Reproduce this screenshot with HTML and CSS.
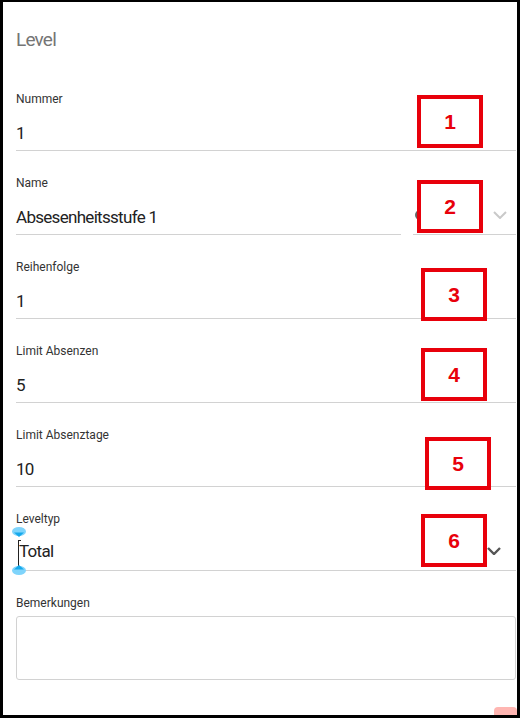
FILE: index.html
```html
<!DOCTYPE html>
<html lang="de">
<head>
    <meta charset="UTF-8">
    <meta name="viewport" content="width=device-width, initial-scale=1.0">
    <title>Level</title>
    <link rel="stylesheet" href="styles.css">
</head>
<body>
    <div class="screen">
        <h1 class="title">Level</h1>

        <form class="form">
            <div class="field">
                <label class="field-label">Nummer</label>
                <div class="field-input">1</div>
            </div>

            <div class="field">
                <label class="field-label">Name</label>
                <div class="field-row">
                    <div class="field-input field-grow">Absesenheitsstufe 1</div>
                    <div class="field-input field-side">
                        <span class="side-dot"></span>
                        <svg class="chevron chevron-light" width="14" height="8" viewBox="0 0 14 8" fill="none">
                            <path d="M1 1l6 6 6-6" stroke="currentColor" stroke-width="2"/>
                        </svg>
                    </div>
                </div>
            </div>

            <div class="field">
                <label class="field-label">Reihenfolge</label>
                <div class="field-input">1</div>
            </div>

            <div class="field">
                <label class="field-label">Limit Absenzen</label>
                <div class="field-input">5</div>
            </div>

            <div class="field">
                <label class="field-label">Limit Absenztage</label>
                <div class="field-input">10</div>
            </div>

            <div class="field">
                <label class="field-label">Leveltyp</label>
                <div class="field-input field-select">
                    <span class="caret"></span>
                    <svg class="handle handle-top" width="14" height="10" viewBox="0 0 14 10">
                        <ellipse cx="7" cy="4.5" rx="7" ry="4.5" fill="#7fd4fb"/>
                        <path d="M2 5.5h10L7 10z" fill="#16a9ec"/>
                    </svg>
                    <svg class="handle handle-bottom" width="14" height="10" viewBox="0 0 14 10">
                        <ellipse cx="7" cy="5.5" rx="7" ry="4.5" fill="#7fd4fb"/>
                        <path d="M2 4.5h10L7 0z" fill="#16a9ec"/>
                    </svg>
                    <span class="select-value">Total</span>
                    <svg class="chevron chevron-dark" width="14" height="8" viewBox="0 0 14 8" fill="none">
                        <path d="M1 1l6 6 6-6" stroke="currentColor" stroke-width="2.4"/>
                    </svg>
                </div>
            </div>

            <div class="field">
                <label class="field-label field-label-area">Bemerkungen</label>
                <textarea class="field-area"></textarea>
            </div>

            <div class="actions">
                <span class="action-button"></span>
            </div>
        </form>

        <!-- Markierungen -->
        <div class="marker marker-1">1</div>
        <div class="marker marker-2">2</div>
        <div class="marker marker-3">3</div>
        <div class="marker marker-4">4</div>
        <div class="marker marker-5">5</div>
        <div class="marker marker-6">6</div>
    </div>
</body>
</html>
```

FILE: styles.css
```css
:root {
    --text-title: #757575;
    --text-label: #333;
    --text-value: #222;
    --line: #d2d2d2;
    --marker: #e8000b;
    --font-sans: Roboto, "Noto Sans", Arial, sans-serif;
}

* {
    box-sizing: border-box;
    margin: 0;
    padding: 0;
}

body {
    background: #000;
    font-family: var(--font-sans);
    -webkit-font-smoothing: antialiased;
}

.screen {
    position: relative;
    width: 520px;
    height: 718px;
    border-style: solid;
    border-color: #000;
    border-width: 2px 3px 3px 3px;
    background: #fff;
    overflow: hidden;
    padding: 26px 1px 0 13px;
}

.title {
    font-size: 19px;
    line-height: 24px;
    font-weight: 400;
    letter-spacing: -0.8px;
    color: var(--text-title);
}

.form {
    margin-top: 39px;
    display: flex;
    flex-direction: column;
    gap: 24px;
}

.field {
    display: flex;
    flex-direction: column;
}

.field-label {
    font-size: 12px;
    line-height: 16px;
    color: var(--text-label);
    margin-bottom: 14px;
}

.field-label-area {
    margin-bottom: 5px;
}

.field-input {
    height: 30px;
    padding-bottom: 5px;
    border-bottom: 1px solid var(--line);
    font-size: 17px;
    line-height: 24px;
    letter-spacing: -0.7px;
    color: var(--text-value);
}

.field-row {
    display: flex;
    gap: 12px;
}

.field-grow {
    flex: 1;
}

.field-side {
    width: 103px;
    display: flex;
    align-items: center;
    justify-content: space-between;
    padding-left: 2px;
    padding-right: 9px;
}

.side-dot {
    width: 10px;
    height: 10px;
    border-radius: 50%;
    background: #666;
    margin-top: -5px;
}

.chevron {
    display: block;
}

.chevron-light {
    color: #c9c9c9;
    margin-top: -5px;
}

.field-select {
    position: relative;
    display: flex;
    align-items: center;
    justify-content: space-between;
    padding-left: 3px;
    padding-right: 15px;
}

.select-value {
    margin-top: -5px;
}

.chevron-dark {
    color: #555;
    margin-top: -5px;
}

.caret {
    position: absolute;
    left: 2px;
    top: -1px;
    width: 1px;
    height: 28px;
    background: #222;
}

.caret::before {
    content: "";
    position: absolute;
    top: 0;
    left: 0;
    width: 3px;
    height: 1px;
    background: #222;
}

.handle {
    position: absolute;
    left: -4px;
}

.handle-top {
    top: -14px;
}

.handle-bottom {
    top: 24px;
}

.field-area {
    display: block;
    width: 100%;
    height: 64px;
    border: 1px solid var(--line);
    border-radius: 3px;
    resize: none;
    background: #fff;
    font-family: var(--font-sans);
}

.actions {
    display: flex;
    justify-content: flex-end;
    margin-top: 3px;
    margin-right: -1px;
}

.action-button {
    width: 23px;
    height: 24px;
    border-radius: 4px;
    background: #ffb6b2;
}

.marker {
    position: absolute;
    width: 66px;
    height: 53px;
    border: 4px solid var(--marker);
    background: #fff;
    display: flex;
    align-items: center;
    justify-content: center;
    font-family: "Liberation Sans", Arial, sans-serif;
    font-size: 21px;
    font-weight: 700;
    color: var(--marker);
}

.marker-1 { left: 414px; top: 93px; }
.marker-2 { left: 414px; top: 178px; }
.marker-3 { left: 418px; top: 266px; }
.marker-4 { left: 418px; top: 346px; }
.marker-5 { left: 422px; top: 435px; }
.marker-6 { left: 418px; top: 512px; }
```
